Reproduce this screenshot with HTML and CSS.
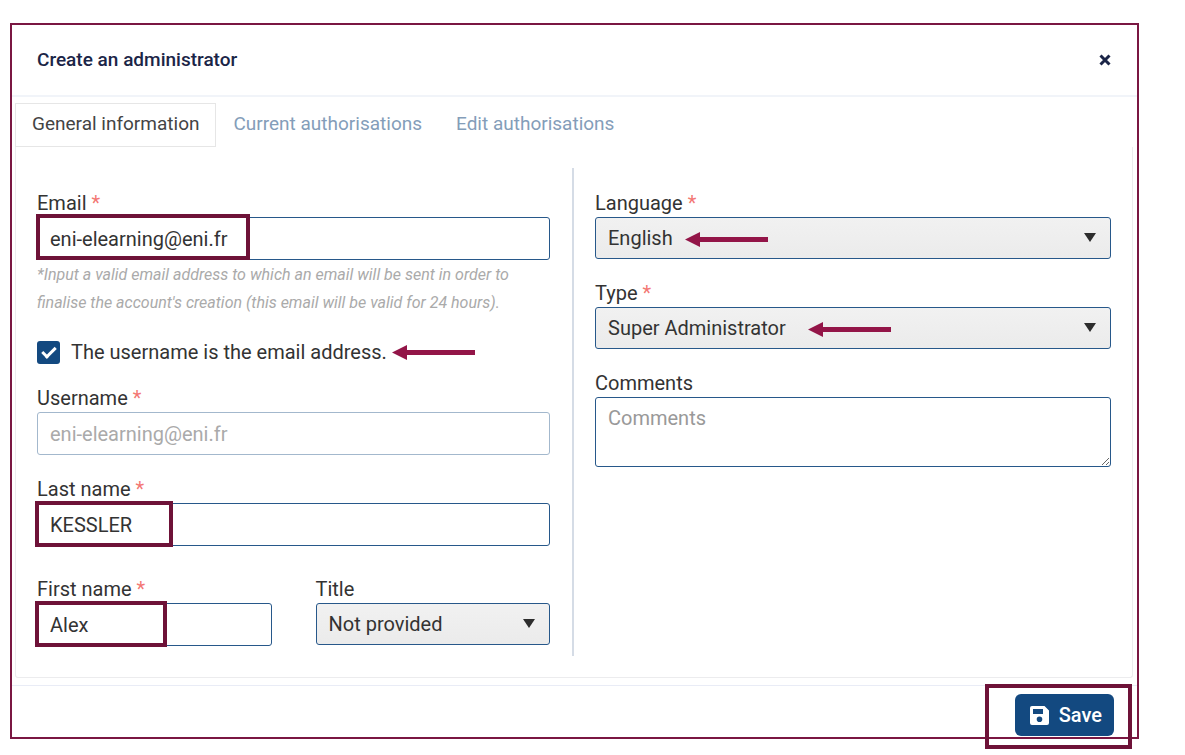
FILE: index.html
```html
<!DOCTYPE html>
<html lang="en">
<head>
    <meta charset="UTF-8">
    <meta name="viewport" content="width=device-width, initial-scale=1.0">
    <title>Create an administrator</title>
    <link rel="stylesheet" href="styles.css">
</head>
<body>
    <form class="dialog">
        <header class="dialog-header">
            <h1>Create an administrator</h1>
            <button type="button" class="close" aria-label="Close">
                <svg width="12" height="12" viewBox="0 0 12 12"><path d="M1.500 1.500l9 9M10.500 1.500l-9 9"/></svg>
            </button>
        </header>

        <nav class="tabs">
            <a href="#general" class="tab active">General information</a>
            <a href="#current" class="tab">Current authorisations</a>
            <a href="#edit" class="tab">Edit authorisations</a>
        </nav>

        <div class="panel" id="general">
            <div class="column column-left">
                <div class="field">
                    <label for="email">Email <span class="required">*</span></label>
                    <div class="control">
                        <input type="text" id="email" value="eni-elearning@eni.fr">
                        <span class="mark mark-email"></span>
                    </div>
                    <p class="hint">*Input a valid email address to which an email will be sent in order to finalise the account's creation (this email will be valid for 24 hours).</p>
                </div>

                <div class="check-row">
                    <input type="checkbox" id="same" checked>
                    <label for="same">The username is the email address.</label>
                    <svg class="arrow" width="83" height="15" viewBox="0 0 83 15"><path d="M0 7.500L15 0v5h68v5H15v5z"/></svg>
                </div>

                <div class="field">
                    <label for="username">Username <span class="required">*</span></label>
                    <div class="control">
                        <input type="text" id="username" value="eni-elearning@eni.fr" disabled>
                    </div>
                </div>

                <div class="field">
                    <label for="lastname">Last name <span class="required">*</span></label>
                    <div class="control">
                        <input type="text" id="lastname" value="KESSLER">
                        <span class="mark mark-lastname"></span>
                    </div>
                </div>

                <div class="name-row">
                    <div class="field">
                        <label for="firstname">First name <span class="required">*</span></label>
                        <div class="control">
                            <input type="text" id="firstname" value="Alex">
                            <span class="mark mark-firstname"></span>
                        </div>
                    </div>
                    <div class="field">
                        <label for="title">Title</label>
                        <div class="control select">
                            <select id="title">
                                <option>Not provided</option>
                            </select>
                        </div>
                    </div>
                </div>
            </div>

            <div class="column column-right">
                <div class="field">
                    <label for="language">Language <span class="required">*</span></label>
                    <div class="control select">
                        <select id="language">
                            <option>English</option>
                        </select>
                        <svg class="arrow arrow-language" width="83" height="15" viewBox="0 0 83 15"><path d="M0 7.500L15 0v5h68v5H15v5z"/></svg>
                    </div>
                </div>

                <div class="field">
                    <label for="type">Type <span class="required">*</span></label>
                    <div class="control select">
                        <select id="type">
                            <option>Super Administrator</option>
                        </select>
                        <svg class="arrow arrow-type" width="83" height="15" viewBox="0 0 83 15"><path d="M0 7.500L15 0v5h68v5H15v5z"/></svg>
                    </div>
                </div>

                <div class="field">
                    <label for="comments">Comments</label>
                    <textarea id="comments" placeholder="Comments"></textarea>
                </div>
            </div>
        </div>

        <footer class="dialog-footer">
            <button type="button" class="save">
                <svg width="19" height="19" viewBox="0 0 19 19"><path fill-rule="evenodd" d="M2 0h12.500L19 4.500V17a2 2 0 0 1-2 2H2a2 2 0 0 1-2-2V2a2 2 0 0 1 2-2zM3 3v5h10V3zM9.500 10.500a2.800 2.800 0 1 0 0 5.600 2.800 2.800 0 0 0 0-5.600z"/></svg>
                Save
            </button>
            <span class="mark mark-save"></span>
        </footer>
    </form>
</body>
</html>
```

FILE: styles.css
```css
:root {
    --blue: #134980;
    --mark: #6e1238;
    --text: #333;
}

* {
    box-sizing: border-box;
    margin: 0;
    padding: 0;
}

body {
    min-height: 100vh;
    padding: 23px 46px 16px 10px;
    background: #fff;
    color: var(--text);
    font-family: Roboto, sans-serif;
    font-size: 20px;
    line-height: 28px;
}

.dialog {
    border: 2px solid #7a1742;
}

.dialog-header {
    display: flex;
    align-items: center;
    justify-content: space-between;
    height: 72px;
    padding: 0 26px 0 25px;
    border-bottom: 2px solid #f1f4f9;
}

h1 {
    color: #1b2547;
    font-size: 19px;
    font-weight: 500;
}

.close {
    display: flex;
    border: none;
    background: none;
    cursor: pointer;
}

.close svg {
    fill: none;
    stroke: #1b2547;
    stroke-width: 3;
}

.tabs {
    display: flex;
    margin: 6px 3px 0;
}

.tab {
    padding: 6px 16px 8px;
    border: 1px solid transparent;
    color: #849db9;
    font-size: 19px;
    text-decoration: none;
}

.tab.active {
    border-color: #e6e6e6;
    color: #444;
}

.panel {
    display: grid;
    grid-template-columns: 1fr 1fr;
    margin: 0 4px 7px 3px;
    padding: 21px;
    border: 1px solid #ececee;
    border-top: none;
    border-radius: 0 0 3px 3px;
}

.column {
    display: flex;
    flex-direction: column;
    gap: 20px;
    padding-top: 21px;
}

.column-left {
    padding-right: 22px;
    padding-bottom: 10px;
    border-right: 2px solid #d5dce6;
}

.column-right {
    padding-left: 21px;
}

.field {
    display: flex;
    flex-direction: column;
}

.required {
    color: #f37774;
}

.control {
    position: relative;
    display: flex;
}

input[type="text"],
select,
textarea {
    width: 100%;
    height: 42px;
    padding: 0 12px;
    border: 1px solid #27588a;
    border-radius: 3px;
    background: #fff;
    color: var(--text);
    font: inherit;
}

input[type="text"] {
    height: 43px;
}

input[type="text"]:disabled {
    border-color: #a3b8cd;
    color: #aaa;
}

select {
    appearance: none;
    background: linear-gradient(#f1f1f1, #ebebeb);
}

.select::after {
    content: "";
    position: absolute;
    top: 16px;
    right: 15px;
    width: 12px;
    height: 9px;
    background: #2d2d2d;
    clip-path: polygon(0 0, 100% 0, 50% 100%);
    pointer-events: none;
}

textarea {
    display: block;
    height: 70px;
    padding-top: 6px;
    resize: vertical;
}

textarea::placeholder {
    color: #999;
}

.hint {
    margin-top: 1px;
    color: #aaa;
    font-size: 16px;
    font-style: italic;
}

.check-row {
    display: flex;
    align-items: center;
    margin: 1px 0 -2px;
}

.check-row input {
    position: relative;
    width: 23px;
    height: 23px;
    margin-right: 11px;
    border-radius: 3px;
    background: var(--blue);
    appearance: none;
}

.check-row input:checked::after {
    content: "";
    position: absolute;
    box-sizing: border-box;
    top: 6px;
    left: 5px;
    width: 14px;
    height: 8px;
    border: solid #fff;
    border-width: 0 0 3px 3px;
    transform: rotate(-45deg);
}

.name-row {
    display: grid;
    grid-template-columns: 1fr 1fr;
    gap: 44px;
    margin-top: 9px;
}

.dialog-footer {
    position: relative;
    display: flex;
    justify-content: flex-end;
    padding: 8px 23px 1px;
    border-top: 1px solid #e9ecf6;
}

.save {
    display: flex;
    align-items: center;
    gap: 10px;
    height: 42px;
    padding: 0 12px 0 15px;
    border: none;
    border-radius: 6px;
    background: var(--blue);
    color: #fff;
    font: inherit;
    font-weight: 500;
    cursor: pointer;
}

.save svg {
    fill: #fff;
}

/* highlight frames and arrows */
.mark {
    position: absolute;
    border: 4px solid var(--mark);
    pointer-events: none;
}

.mark-email {
    top: -3px;
    left: -1px;
    width: 214px;
    height: 46px;
}

.mark-lastname {
    top: -2px;
    left: -2px;
    width: 138px;
    height: 46px;
}

.mark-firstname {
    top: -2px;
    left: -2px;
    width: 132px;
    height: 46px;
}

.mark-save {
    top: -2px;
    right: 5px;
    width: 147px;
    height: 65px;
}

.arrow {
    fill: #931548;
}

.check-row .arrow {
    margin-left: 5px;
}

.arrow-language,
.arrow-type {
    position: absolute;
    top: 15px;
    left: 90px;
    pointer-events: none;
}

.arrow-type {
    left: 213px;
}
```
